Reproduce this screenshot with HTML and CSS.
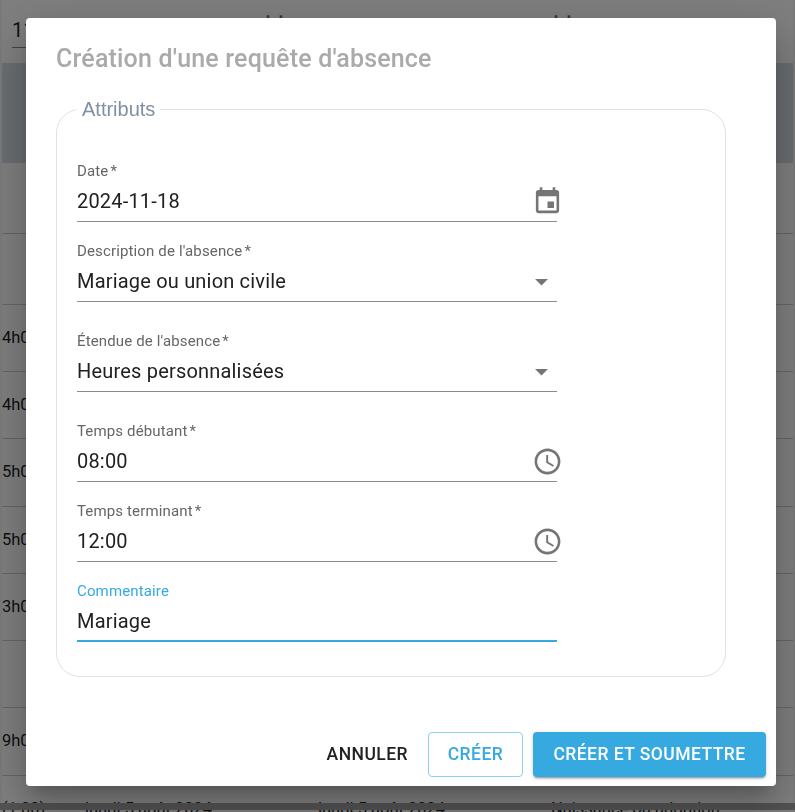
FILE: index.html
```html
<!DOCTYPE html>
<html lang="fr">
<head>
    <title>Création d'une requête d'absence</title>
    <link rel="stylesheet" href="styles.css">
</head>
<body>

    <div class="page">
        <div class="filters">
            <div class="filter">
                <span>11</span>
                <svg class="icon" viewBox="0 0 24 24"><path d="M17 12h-5v5h5v-5zM16 1v2H8V1H6v2H5c-1.11 0-1.99.9-1.99 2L3 19c0 1.1.89 2 2 2h14c1.1 0 2-.9 2-2V5c0-1.1-.9-2-2-2h-1V1h-2zm3 18H5V8h14v11z"/></svg>
            </div>
            <div class="filter">
                <span>11</span>
                <svg class="icon" viewBox="0 0 24 24"><path d="M17 12h-5v5h5v-5zM16 1v2H8V1H6v2H5c-1.11 0-1.99.9-1.99 2L3 19c0 1.1.89 2 2 2h14c1.1 0 2-.9 2-2V5c0-1.1-.9-2-2-2h-1V1h-2zm3 18H5V8h14v11z"/></svg>
            </div>
        </div>
        <div class="table-head"></div>
        <div class="row row-71"></div>
        <div class="row row-71"></div>
        <div class="row">4h00</div>
        <div class="row">4h00</div>
        <div class="row row-68">5h00</div>
        <div class="row">5h00</div>
        <div class="row">3h00</div>
        <div class="row"></div>
        <div class="row row-68">9h00</div>
        <div class="row row-last">
            <div class="cell-time">(1:00)</div>
            <div class="cell-date">lundi 5 août 2024</div>
            <div class="cell-date">lundi 5 août 2024</div>
            <div>Naissance ou adoption</div>
        </div>
    </div>
    <div class="scrollbar"></div>

    <div class="backdrop">
        <div class="dialog">
            <h2 class="dialog-title">Création d'une requête d'absence</h2>

            <fieldset class="attributes">
                <legend>Attributs</legend>

                <div class="field">
                    <label>Date<span class="req">*</span></label>
                    <div class="input-row">
                        <span>2024-11-18</span>
                        <svg class="icon icon-end" viewBox="0 0 24 24"><path d="M17 12h-5v5h5v-5zM16 1v2H8V1H6v2H5c-1.11 0-1.99.9-1.99 2L3 19c0 1.1.89 2 2 2h14c1.1 0 2-.9 2-2V5c0-1.1-.9-2-2-2h-1V1h-2zm3 18H5V8h14v11z"/></svg>
                    </div>
                </div>

                <div class="field field-select">
                    <label>Description de l'absence<span class="req">*</span></label>
                    <div class="input-row">
                        <span>Mariage ou union civile</span>
                        <svg class="icon" viewBox="0 0 24 24"><path d="M7 10l5 5 5-5z"/></svg>
                    </div>
                </div>

                <div class="field field-select">
                    <label>Étendue de l'absence<span class="req">*</span></label>
                    <div class="input-row">
                        <span>Heures personnalisées</span>
                        <svg class="icon" viewBox="0 0 24 24"><path d="M7 10l5 5 5-5z"/></svg>
                    </div>
                </div>

                <div class="field">
                    <label>Temps débutant<span class="req">*</span></label>
                    <div class="input-row">
                        <span>08:00</span>
                        <svg class="icon icon-end" viewBox="0 0 24 24"><path d="M11.99 2C6.47 2 2 6.48 2 12s4.47 10 9.99 10C17.52 22 22 17.52 22 12S17.52 2 11.99 2zM12 20c-4.42 0-8-3.58-8-8s3.58-8 8-8 8 3.58 8 8-3.58 8-8 8z"/><path d="M12.5 7H11v6l5.25 3.15.75-1.23-4.5-2.67z"/></svg>
                    </div>
                </div>

                <div class="field">
                    <label>Temps terminant<span class="req">*</span></label>
                    <div class="input-row">
                        <span>12:00</span>
                        <svg class="icon icon-end" viewBox="0 0 24 24"><path d="M11.99 2C6.47 2 2 6.48 2 12s4.47 10 9.99 10C17.52 22 22 17.52 22 12S17.52 2 11.99 2zM12 20c-4.42 0-8-3.58-8-8s3.58-8 8-8 8 3.58 8 8-3.58 8-8 8z"/><path d="M12.5 7H11v6l5.25 3.15.75-1.23-4.5-2.67z"/></svg>
                    </div>
                </div>

                <div class="field field-focused">
                    <label>Commentaire</label>
                    <div class="input-row">
                        <span>Mariage</span>
                    </div>
                </div>
            </fieldset>

            <div class="dialog-actions">
                <button class="btn btn-text">ANNULER</button>
                <button class="btn btn-outlined">CRÉER</button>
                <button class="btn btn-primary">CRÉER ET SOUMETTRE</button>
            </div>
        </div>
    </div>

</body>
</html>
```

FILE: styles.css
```css
html, body {
    margin: 0;
    height: 100%;
    overflow: hidden;
}
body {
    font-family: Roboto, "Liberation Sans", sans-serif;
    background-color: #f4f4f4;
    color: #212121;
}
.page {
    margin: 0 2px;
    background-color: white;
    height: 812px;
    overflow: hidden;
}
.filters {
    display: flex;
    gap: 10px;
    height: 63px;
    padding-left: 10px;
}
.filter {
    width: 278px;
    height: 48px;
    box-sizing: border-box;
    border-bottom: 1px solid #888;
    display: flex;
    justify-content: space-between;
    align-items: center;
    font-size: 20px;
    padding-top: 12px;
}
.table-head {
    height: 100px;
    background-color: #d5dbe3;
}
.row {
    height: 67px;
    box-sizing: border-box;
    padding-bottom: 2px;
    border-bottom: 1px solid #ccc;
    display: flex;
    align-items: center;
    font-size: 16.5px;
}
.row-68 {
    height: 68px;
}
.row-71 {
    height: 71px;
}
.row-last {
    border-bottom: none;
}
.cell-time {
    width: 83px;
}
.cell-date {
    width: 233px;
}
.scrollbar {
    position: fixed;
    left: 0;
    right: 0;
    bottom: 2px;
    height: 7px;
    background-color: #a6a6a6;
}

.backdrop {
    position: fixed;
    top: 0;
    left: 0;
    width: 100%;
    height: 100%;
    background-color: rgba(0, 0, 0, 0.5);
}
.dialog {
    width: 750px;
    margin: 18px 0 0 26px;
    background-color: white;
    border-radius: 4px;
    box-shadow: 0 11px 15px -7px rgba(0, 0, 0, 0.2), 0 24px 38px 3px rgba(0, 0, 0, 0.14), 0 9px 46px 8px rgba(0, 0, 0, 0.12);
}
.dialog-title {
    margin: 0;
    padding: 25px 30px 0;
    font-size: 25px;
    font-weight: 500;
    line-height: 32px;
    letter-spacing: 0.0075em;
    color: #aaaaaa;
}
.attributes {
    margin: 23px 50px 0 30px;
    padding: 40px 20px 34px;
    border: 1px solid #dde3ea;
    border-radius: 24px;
}
.attributes legend {
    padding: 0 5px;
    font-family: "Liberation Sans", Arial, sans-serif;
    font-size: 20px;
    color: #7f90a3;
}

.field {
    width: 480px;
    margin-bottom: 19px;
}
.field-select {
    margin-bottom: 29px;
}
.field:last-child {
    margin-bottom: 0;
}
.field label {
    display: block;
    height: 20px;
    font-size: 15px;
    line-height: 20px;
    letter-spacing: 0.14px;
    color: #666;
}
.req {
    margin-left: 2px;
}
.input-row {
    display: flex;
    justify-content: space-between;
    align-items: center;
    height: 40px;
    border-bottom: 1px solid #8a8a8a;
    font-size: 20px;
    letter-spacing: 0.19px;
}
.field-focused label {
    color: #36a9e1;
}
.field-focused .input-row {
    height: 39px;
    border-bottom: 2px solid #36a9e1;
}
.icon {
    width: 31px;
    height: 31px;
    flex: none;
    fill: #757575;
}
.icon-end {
    margin-right: -6px;
}

.dialog-actions {
    display: flex;
    justify-content: flex-end;
    align-items: center;
    gap: 10px;
    padding: 55px 10px 9px 0;
}
.btn {
    height: 45px;
    box-sizing: border-box;
    padding: 0 10px 2px;
    border: none;
    border-radius: 4px;
    font-family: Roboto, "Liberation Sans", sans-serif;
    font-size: 17.5px;
    font-weight: 500;
    letter-spacing: 0.45px;
    background: none;
}
.btn-text {
    color: #212121;
}
.btn-outlined {
    width: 95px;
    border: 1px solid #8ed0f1;
    color: #36a9e1;
}
.btn-primary {
    width: 233px;
    background-color: #36a9e1;
    color: white;
    box-shadow: 0 3px 1px -2px rgba(0, 0, 0, 0.2), 0 2px 2px 0 rgba(0, 0, 0, 0.14), 0 1px 5px 0 rgba(0, 0, 0, 0.12);
}
```
